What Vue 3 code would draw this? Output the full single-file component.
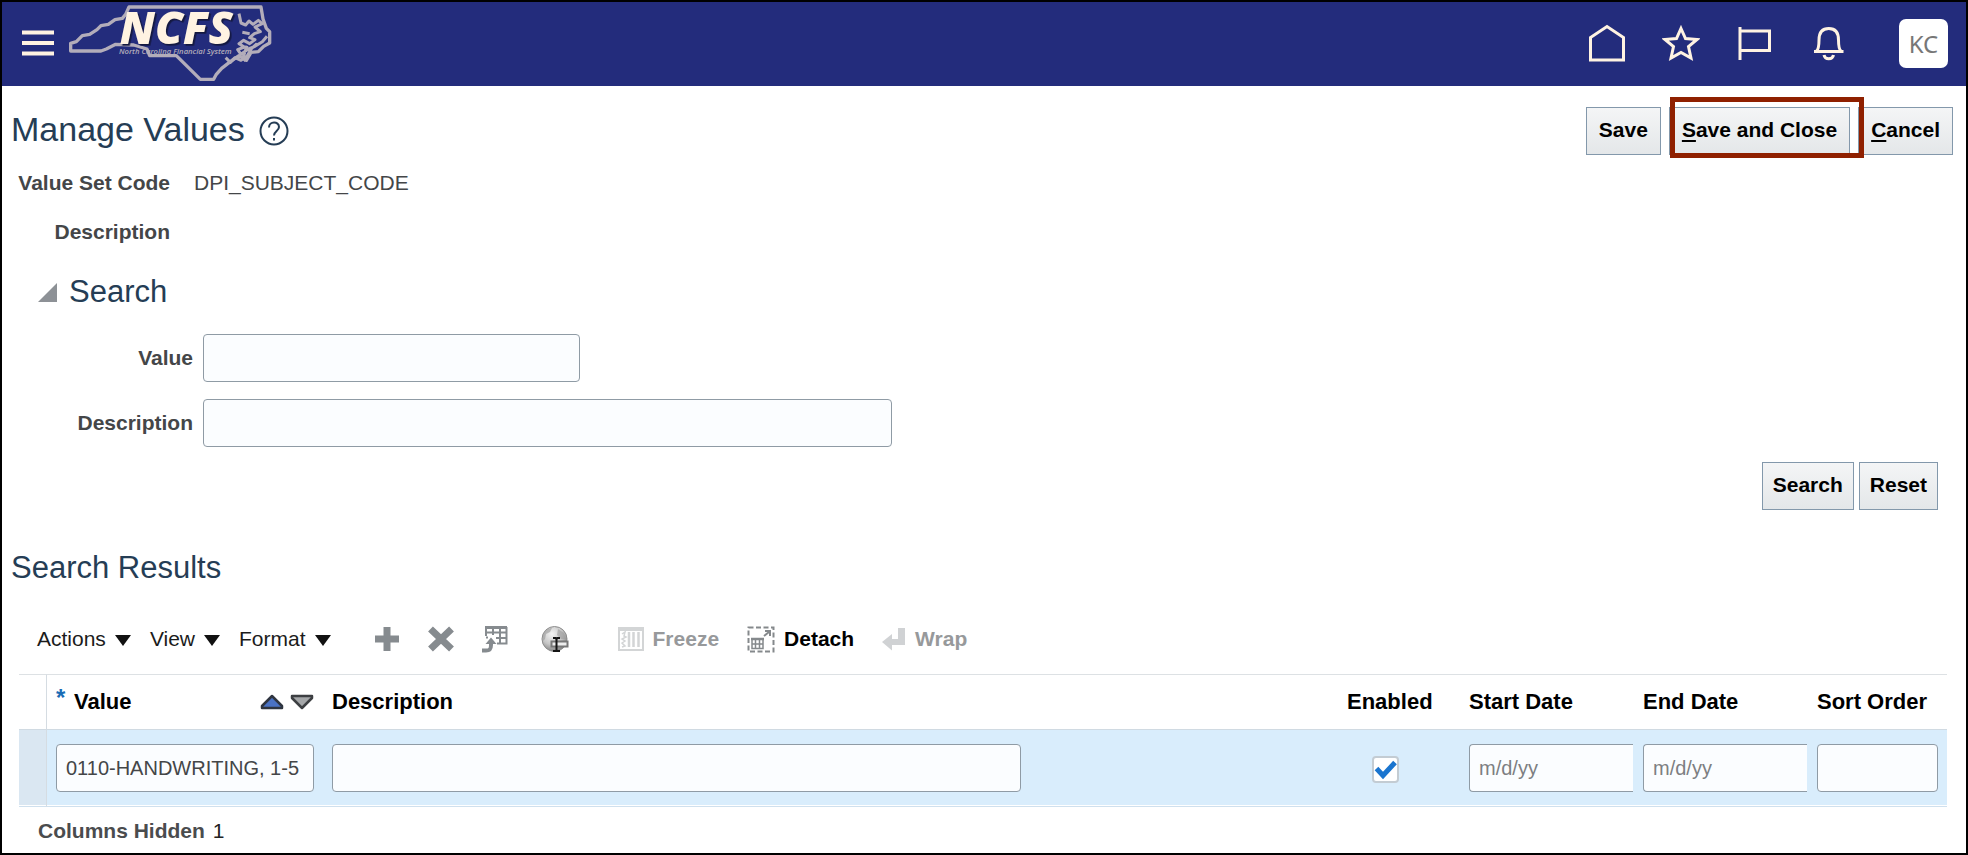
<script setup>
import { ref } from 'vue'

const menus = ['Actions', 'View', 'Format']
const searchValue = ref('')
const searchDescription = ref('')
const row = ref({
  value: '0110-HANDWRITING, 1-5',
  description: '',
  enabled: true,
  start: '',
  end: '',
  order: ''
})
</script>

<template>
  <div class="page">
    <header class="topbar">
      <button class="icon-btn" type="button" aria-label="Navigator">
        <svg width="32" height="26" viewBox="0 0 32 26">
          <path d="M0 2.5H32M0 13H32M0 23.500H32" stroke="#fff3e2" stroke-width="4" />
        </svg>
      </button>
      <a class="logo" href="#" aria-label="NCFS home">
        <svg width="207" height="80" viewBox="200 12 621 240">
          <g fill="none" stroke="#b3adba" stroke-width="10" stroke-linejoin="round">
            <path d="M386 24H782L788 60L798 88L808 98V132L790 142L774 158L752 160L738 184L716 170L690 188L664 208L648 226L640 241H600L528 170H448L440 150L400 138L346 136L318 150L302 156H211V133L228 128L246 110L268 106L290 92L302 80L324 76L344 62L366 58L376 46Z" />
            <path d="M716 44L722 72L736 78L746 66L758 76L774 64L786 74L764 84L780 98L762 104L748 116L764 122L748 134L730 124L716 134L732 144L712 152L722 166L744 150L764 142L786 128L800 112M676 176L690 190L704 176L722 184L740 172L754 148L770 134M748 104L726 100M740 140L728 176L736 186" stroke-width="9" />
          </g>
          <text x="358" y="135" class="logo-name">NCFS</text>
          <text x="356" y="164" class="logo-sub">North Carolina Financial System</text>
        </svg>
      </a>
      <nav class="top-icons">
        <button class="icon-btn" type="button" aria-label="Home">
          <svg width="38" height="38" viewBox="0 0 38 38"><path d="M2.500 36V13.500L19 2.500L35.500 13.500V36Z" /></svg>
        </button>
        <button class="icon-btn" type="button" aria-label="Favorites">
          <svg width="38" height="38" viewBox="0 0 38 38"><path d="M19 4.500L23.500 14.500L35 15.500L26.500 22.500L29 34L19 28.500L9 34L11.500 22.500L3 15.500L14.500 14.500Z" /></svg>
        </button>
        <button class="icon-btn" type="button" aria-label="Watchlist">
          <svg width="38" height="38" viewBox="0 0 38 38"><path d="M4 3V36M4 7H33.500V26.500H4" /></svg>
        </button>
        <button class="icon-btn" type="button" aria-label="Notifications">
          <svg width="38" height="38" viewBox="0 0 38 38">
            <path d="M4 27.500H33.500M6.500 27C9 25 9 21 9 16C9 8 13 4.500 18.800 4.500S28.500 8 28.500 16C28.500 21 28.500 25 31 27" />
            <path d="M14 31C15 36 22.500 36 23.500 31" />
          </svg>
        </button>
      </nav>
      <button class="avatar" type="button" aria-label="Account KC">KC</button>
    </header>

    <main>
      <div class="title-bar">
        <h1>Manage Values</h1>
        <button class="icon-btn help" type="button" aria-label="Help">
          <svg width="30" height="30" viewBox="0 0 30 30" fill="none" stroke="#253d55" stroke-width="2">
            <circle cx="15" cy="15" r="13.500" />
            <path d="M10 11.500C10 5 20 5 20 11C20 15 15 15 15 19.500" />
            <path d="M15 22V24.500" />
          </svg>
        </button>
        <div class="page-actions">
          <button class="btn" type="button">Save</button>
          <div class="highlight">
            <button class="btn" type="button"><u>S</u>ave and Close</button>
          </div>
          <button class="btn" type="button"><u>C</u>ancel</button>
        </div>
      </div>

      <dl class="summary">
        <dt>Value Set Code</dt>
        <dd>DPI_SUBJECT_CODE</dd>
        <dt>Description</dt>
        <dd></dd>
      </dl>

      <section class="search">
        <h2>
          <button class="icon-btn" type="button" aria-label="Collapse Search">
            <svg width="19" height="19" viewBox="0 0 19 19"><path d="M0 19L19 0V19Z" fill="#8d9196" /></svg>
          </button>
          Search
        </h2>
        <form class="fields" @submit.prevent>
          <label for="q-value">Value</label>
          <input id="q-value" v-model="searchValue" class="field short" type="text" />
          <label for="q-description">Description</label>
          <input id="q-description" v-model="searchDescription" class="field long" type="text" />
        </form>
        <div class="search-actions">
          <button class="btn tight" type="button">Search</button>
          <button class="btn tight" type="button">Reset</button>
        </div>
      </section>

      <section class="results">
        <h2>Search Results</h2>
        <div class="toolbar">
          <div class="menus">
            <button v-for="m in menus" :key="m" class="tool" type="button">
              {{ m }}
              <svg width="16" height="11" viewBox="0 0 16 11"><path d="M0 0H16L8 11Z" fill="#111" /></svg>
            </button>
          </div>
          <div class="icon-tools">
            <button class="icon-btn" type="button" aria-label="Add Row">
              <svg width="26" height="28" viewBox="0 0 26 28"><path d="M1 14H25M13 2V26" stroke="#868b8f" stroke-width="7" /></svg>
            </button>
            <button class="icon-btn" type="button" aria-label="Delete">
              <svg width="26" height="28" viewBox="0 0 26 28"><path d="M2.500 4L23.500 24M23.500 4L2.500 24" stroke="#868b8f" stroke-width="7" /></svg>
            </button>
            <button class="icon-btn" type="button" aria-label="Export to Excel">
              <svg width="26" height="28" viewBox="0 0 26 28" fill="none" stroke="#868b8f">
                <path d="M3 2.500H25" stroke-width="3" />
                <path d="M4 1V11M11 4V10M18 4V19M24.500 2V19M4 7.500H25M4 12.500H6M14 13H25M15 18.500H25.500" stroke-width="2" />
                <path d="M0 25.500H4C8 25.500 9 24 9 20V18" stroke-width="4" />
                <path d="M3.500 19L9 12.500L14.500 19Z" fill="#868b8f" stroke="none" />
              </svg>
            </button>
            <button class="icon-btn translate" type="button" aria-label="Translate">
              <svg width="28" height="28" viewBox="0 0 28 28">
                <defs>
                  <radialGradient id="globe" cx="0.4" cy="0.3" r="0.7">
                    <stop offset="0" stop-color="#f4f4f4" />
                    <stop offset="0.6" stop-color="#c6c6c6" />
                    <stop offset="1" stop-color="#858585" />
                  </radialGradient>
                </defs>
                <circle cx="13.500" cy="14" r="12.500" fill="url(#globe)" stroke="#8c8c8c" />
                <path d="M2 9C5 4 8 3 11 3L9 7L5 9L4 14L2 16ZM17 4L23 8L25 14H20L16 10Z" fill="#999" opacity="0.6" />
                <rect x="10.500" y="16.500" width="16" height="5" fill="#eee" stroke="#777" stroke-width="2" />
                <path d="M12 13H14.500L15.500 14L16.500 13H19M15.500 14V25M12 26H14.500L15.500 25L16.500 26H19" fill="none" stroke="#151515" stroke-width="2" />
              </svg>
            </button>
          </div>
          <div class="text-tools">
            <button class="tool strong" type="button" disabled>
              <svg width="26" height="24" viewBox="0 0 26 24" fill="none" stroke="#d3d5d6">
                <rect x="1" y="1" width="24" height="22" stroke-width="2" />
                <path d="M1 3H25" stroke-width="2" />
                <path d="M11 5V20M15.500 5V20M20.500 5V20" stroke-width="2.500" />
                <path d="M4 7L7 5L6 9L8 10L4 12L7 14L4 16L7 19L4 20" stroke-width="1.500" />
              </svg>
              Freeze
            </button>
            <button class="tool strong" type="button">
              <svg width="28" height="27" viewBox="0 0 28 27" fill="none" stroke="#85898c">
                <rect x="1.500" y="1.500" width="25" height="24" stroke-width="2" stroke-dasharray="5 2.500" />
                <path d="M5 13H16V22.500H5ZM5 18H16M8.500 14V22M12.500 14V22" stroke-width="1.500" />
                <path d="M4 13H17" stroke-width="2.500" />
                <path d="M17 10L22 6M18 5H23V10" stroke-width="2" />
              </svg>
              Detach
            </button>
            <button class="tool strong" type="button" disabled>
              <svg width="24" height="24" viewBox="0 0 24 24"><path d="M16 1H23V18H10V23.500L0 15L10 7V12H16Z" fill="#d0d2d4" /></svg>
              Wrap
            </button>
          </div>
        </div>

        <table>
          <colgroup>
            <col class="c-gutter" />
            <col class="c-value" />
            <col />
            <col class="c-enabled" />
            <col class="c-date" />
            <col class="c-date" />
            <col class="c-order" />
          </colgroup>
          <thead>
            <tr>
              <td class="gutter"></td>
              <th scope="col">
                <div class="value-head">
                  <span class="required">*</span>
                  <span id="h-value">Value</span>
                  <span class="sorters">
                    <button class="icon-btn" type="button" aria-label="Sort Ascending">
                      <svg width="24" height="16" viewBox="0 0 24 16"><path d="M12 2L22 12V14H2V12Z" fill="#4a72c4" stroke="#2f3540" stroke-width="2.500" stroke-linejoin="round" /></svg>
                    </button>
                    <button class="icon-btn" type="button" aria-label="Sort Descending">
                      <svg width="24" height="16" viewBox="0 0 24 16"><path d="M2 2H22V4L12 14L2 4Z" fill="#a5a7a9" stroke="#3d3f42" stroke-width="2.500" stroke-linejoin="round" /></svg>
                    </button>
                  </span>
                </div>
              </th>
              <th id="h-description" scope="col">Description</th>
              <th id="h-enabled" scope="col">Enabled</th>
              <th id="h-start" scope="col">Start Date</th>
              <th id="h-end" scope="col">End Date</th>
              <th id="h-order" scope="col">Sort Order</th>
            </tr>
          </thead>
          <tbody>
            <tr>
              <td class="gutter"></td>
              <td><input v-model="row.value" class="field" type="text" aria-labelledby="h-value" /></td>
              <td><input v-model="row.description" class="field long" type="text" aria-labelledby="h-description" /></td>
              <td>
                <span class="check">
                  <input v-model="row.enabled" type="checkbox" aria-labelledby="h-enabled" />
                  <svg v-if="row.enabled" width="27" height="27" viewBox="0 0 27 27"><path d="M4.500 12.500L11 19.500L23 6.500" fill="none" stroke="#1a75cf" stroke-width="5" /></svg>
                </span>
              </td>
              <td class="date-cell"><input v-model="row.start" class="field date" type="text" placeholder="m/d/yy" aria-labelledby="h-start" /></td>
              <td class="date-cell"><input v-model="row.end" class="field date" type="text" placeholder="m/d/yy" aria-labelledby="h-end" /></td>
              <td><input v-model="row.order" class="field" type="text" aria-labelledby="h-order" /></td>
            </tr>
          </tbody>
        </table>
        <p class="hidden-count"><b>Columns Hidden</b> 1</p>
      </section>
    </main>
  </div>
</template>

<style>
body {
  margin: 0;
}
</style>

<style scoped>
* {
  box-sizing: border-box;
}
.page {
  min-height: 100vh;
  border: 2px solid #000;
  background: #fff;
  color: #444648;
  font-family: "Liberation Sans", Arial, sans-serif;
  font-size: 21px;
}
button,
input {
  font: inherit;
  margin: 0;
}
svg {
  display: block;
  flex: none;
}
.icon-btn {
  padding: 0;
  border: 0;
  background: none;
  display: block;
}
.topbar {
  display: flex;
  align-items: center;
  height: 84px;
  padding: 0 18px 2px 20px;
  background: #232c7c;
}
.logo {
  margin-left: 13px;
}
.logo svg {
  overflow: visible;
}
.logo-name {
  font: italic 800 134px "Open Sans", "Noto Sans", sans-serif;
  fill: #fff3e2;
  filter: drop-shadow(5px 5px 2px #14183f);
}
.logo-sub {
  font: italic 600 23px "Open Sans", sans-serif;
  fill: #b3adba;
}
.top-icons {
  display: flex;
  gap: 36px;
  margin: 0 51px 0 auto;
  fill: none;
  stroke: #fff3e2;
  stroke-width: 3;
}
.avatar {
  width: 49px;
  height: 49px;
  padding: 0;
  border: 0;
  border-radius: 7px;
  background: #fff;
  color: #777;
  font: 24px "Noto Sans", sans-serif;
}
.title-bar {
  display: flex;
  align-items: flex-start;
  padding: 21px 13px 3px 9px;
}
h1,
h2 {
  margin: 0;
  color: #253d55;
  font-weight: 400;
}
h1 {
  font-size: 34px;
  line-height: 44px;
}
h2 {
  font-size: 31px;
  line-height: 36px;
}
.help {
  margin: 9px 0 0 14px;
}
.page-actions {
  display: flex;
  gap: 8px;
  margin-left: auto;
}
.btn {
  height: 48px;
  padding: 0 12px 2px;
  border: 1px solid #8398ab;
  background: linear-gradient(#f4f5f6, #e4e7e9);
  color: #000;
  font-weight: 700;
}
.btn.tight {
  padding: 0 10px 2px;
}
.btn u {
  text-decoration-thickness: 2px;
  text-underline-offset: 3px;
}
.highlight {
  position: relative;
}
.highlight::after {
  content: "";
  position: absolute;
  inset: -10px -14px -3px 1px;
  z-index: 1;
  border: 5px solid #8f2000;
  pointer-events: none;
}
.summary {
  display: grid;
  grid-template-columns: 168px 1fr;
  grid-auto-rows: 49px;
  column-gap: 24px;
  margin: 0;
  line-height: 49px;
}
.summary dt {
  font-weight: 700;
  text-align: right;
}
.summary dd {
  margin: 0;
}
.search {
  margin-top: 18px;
}
.search h2 {
  display: flex;
  align-items: center;
  gap: 12px;
  padding-left: 36px;
}
.fields {
  display: grid;
  grid-template-columns: 191px 1fr;
  gap: 17px 10px;
  align-items: center;
  margin-top: 24px;
}
.fields label {
  font-weight: 700;
  text-align: right;
}
.field {
  display: block;
  width: 100%;
  height: 48px;
  padding: 0 1px 0 9px;
  border: 1px solid #8f9ba5;
  border-radius: 4px;
  background: #fbfdff;
  color: #444648;
  font-size: 20px;
}
.field.short {
  width: 377px;
}
.field.long {
  width: 689px;
  max-width: 100%;
}
.field.date {
  border-right: 0;
  border-radius: 4px 0 0 4px;
}
.field::placeholder {
  color: #7d7f82;
  opacity: 1;
}
.search-actions {
  display: flex;
  justify-content: flex-end;
  gap: 5px;
  padding: 15px 28px 0 0;
}
.results {
  margin-top: 40px;
}
.results h2 {
  padding-left: 9px;
}
.toolbar {
  display: flex;
  align-items: center;
  height: 30px;
  margin-top: 38px;
  padding-left: 35px;
}
.tool {
  display: flex;
  align-items: center;
  gap: 9px;
  padding: 0;
  border: 0;
  background: none;
  color: #1b1b1b;
}
.menus {
  display: flex;
  gap: 19px;
}
.menus svg {
  margin-top: 3px;
}
.icon-tools {
  display: flex;
  gap: 28px;
  margin-left: 43px;
}
.translate {
  margin-left: 5px;
}
.text-tools {
  display: flex;
  gap: 28px;
  margin-left: 49px;
}
.tool.strong {
  color: #000;
  font-weight: 700;
}
.tool.strong:disabled {
  color: #97999b;
}
table {
  width: calc(100% - 36px);
  margin: 20px 0 0 17px;
  border-collapse: separate;
  border-spacing: 0;
  table-layout: fixed;
}
.c-gutter {
  width: 28px;
}
.c-value {
  width: 276px;
}
.c-enabled {
  width: 122px;
}
.c-date {
  width: 174px;
}
.c-order {
  width: 139px;
}
th,
td {
  padding: 0 9px;
}
thead th,
thead td {
  height: 56px;
  border-top: 1px solid #dde1e4;
  border-bottom: 1px solid #d0dae2;
  color: #000;
  font-size: 22px;
  text-align: left;
  white-space: nowrap;
}
tbody td {
  height: 77px;
  background: #d9edfc;
  border-bottom: 1px solid #cfe0ee;
  box-shadow: inset 0 -1px #fff;
}
td.gutter {
  padding: 0;
  border-right: 1px solid #d5dce2;
}
td.date-cell {
  padding-right: 1px;
}
tbody .gutter {
  background: #dae7f2;
}
.value-head {
  display: flex;
  align-items: center;
}
.required {
  width: 18px;
  padding-bottom: 8px;
  color: #1a6cb5;
  font-size: 24px;
}
.sorters {
  display: flex;
  gap: 6px;
  margin-left: auto;
}
.check {
  display: grid;
  width: 27px;
  margin: 2px 0 0 25px;
}
.check > * {
  grid-area: 1 / 1;
}
.check input {
  appearance: none;
  width: 27px;
  height: 27px;
  border: 2px solid #c3ccd3;
  border-radius: 4px;
  background: #fff;
}
.check svg {
  pointer-events: none;
}
.hidden-count {
  margin: 0;
  padding: 9px 0 0 36px;
  line-height: 30px;
  color: #222;
}
.hidden-count b {
  margin-right: 2px;
  color: #4a4c4e;
}
</style>
